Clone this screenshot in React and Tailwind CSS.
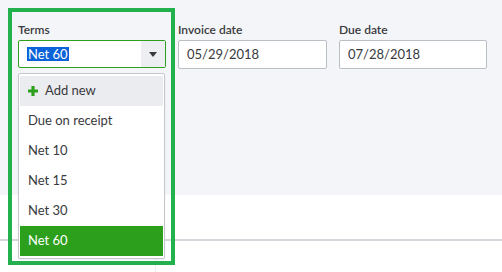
import { useState } from "react";

const TERMS = ["Due on receipt", "Net 10", "Net 15", "Net 30", "Net 60"];

const Field = ({ label, value, width }) => (
  <div className={`flex flex-col ${width}`}>
    <label className="h-[16px] text-[12px] leading-[16px] font-semibold text-[#393a3d]">{label}</label>
    <div className="mt-[2px] h-[29px] flex items-center px-[8px] bg-white border border-[#babec5] rounded-[2px] text-[13px] text-[#393a3d]">
      {value}
    </div>
  </div>
);

const App = () => {
  const [selected, setSelected] = useState("Net 60");

  return (
    <div className="relative w-[502px] h-[272px] overflow-hidden bg-white font-['Lato','Liberation_Sans',sans-serif]">
      {/* form area */}
      <div className="h-[195px] bg-[#f4f5f8] pl-[18px] pt-[22px]">
        <div className="flex gap-[12px]">
          <div className="relative flex flex-col w-[148px]">
            <label className="h-[16px] text-[12px] leading-[16px] font-semibold text-[#393a3d]">Terms</label>
            <div className="mt-[2px] h-[28px] flex bg-white border border-[#2ca01c] rounded-[2px]">
              <div className="flex-1 flex items-center pl-[8px] text-[13px]">
                <span className="bg-[#0a63d8] text-white leading-[14px] px-[1px]">{selected}</span>
              </div>
              <div className="w-[24px] bg-[#eceef1] flex items-center justify-center">
                <svg width="8" height="5" viewBox="0 0 8 5">
                  <path d="M0 0 L8 0 L4 5 Z" fill="#393a3d" />
                </svg>
              </div>
            </div>

            {/* dropdown */}
            <div className="absolute z-10 left-0 top-[51px] w-[147px] bg-white border border-[#c4c7cc] rounded-[2px] py-[2px] px-[1px] shadow-[0_1px_2px_rgba(0,0,0,0.08)]">
              <div className="h-[30px] flex items-center gap-[7px] pl-[8px] bg-[#ebecf0] text-[13px] text-[#393a3d]">
                <svg width="10" height="10" viewBox="0 0 10 10">
                  <path d="M5 0 V10 M0 5 H10" stroke="#2ca01c" strokeWidth="3.2" />
                </svg>
                <span>Add new</span>
              </div>
              {TERMS.map((t) => (
                <div
                  key={t}
                  onClick={() => setSelected(t)}
                  className={`h-[30px] flex items-center pl-[8px] text-[13px] ${
                    t === selected ? "bg-[#2ca01c] text-white" : "text-[#393a3d]"
                  }`}
                >
                  {t}
                </div>
              ))}
            </div>
          </div>
          <Field label="Invoice date" value="05/29/2018" width="w-[149px]" />
          <Field label="Due date" value="07/28/2018" width="w-[148px]" />
        </div>
      </div>

      {/* lower section */}
      <div className="h-[44px]" />
      <div className="h-[2px] bg-[#d4d7dc]" />
      <div className="ml-[155px] h-[31px] border-l border-dotted border-[#dfe1e4]" />

      {/* highlight annotation */}
      <div className="absolute z-20 left-[8px] top-[8px] w-[167px] h-[257px] border-[4px] border-[#22b14c] pointer-events-none" />
    </div>
  );
};

export default App;
